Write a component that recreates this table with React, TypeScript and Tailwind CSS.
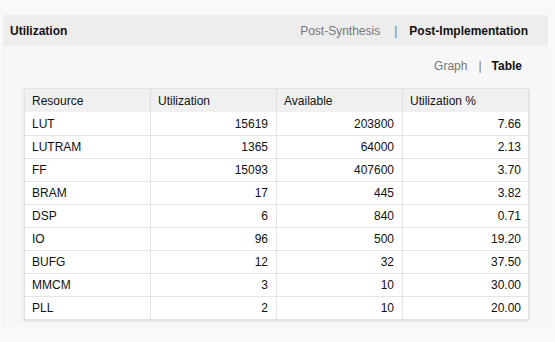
import React from "react";

const rows: [string, string, string, string][] = [
  ["LUT", "15619", "203800", "7.66"],
  ["LUTRAM", "1365", "64000", "2.13"],
  ["FF", "15093", "407600", "3.70"],
  ["BRAM", "17", "445", "3.82"],
  ["DSP", "6", "840", "0.71"],
  ["IO", "96", "500", "19.20"],
  ["BUFG", "12", "32", "37.50"],
  ["MMCM", "3", "10", "30.00"],
  ["PLL", "2", "10", "20.00"],
];

export default function App() {
  return (
    <div
      className="w-[555px] h-[342px] bg-[#f9f9fa] pt-[15px] px-[3px] text-[12px] text-[#111]"
      style={{ fontFamily: '"Liberation Sans", Arial, sans-serif' }}
    >
      <div className="w-[545px] h-[31px] bg-[#ededee] flex items-center justify-between pl-[7px] pr-[20px]">
        <span className="font-bold">Utilization</span>
        <div className="flex items-center">
          <span className="text-[#777]">Post-Synthesis</span>
          <span className="text-[#777] ml-[14px] mr-[12px]">|</span>
          <span className="font-bold">Post-Implementation</span>
        </div>
      </div>
      <div className="w-[545px] h-[283px] bg-[#f7f7f8]">
        <div className="flex justify-end items-center h-[40px] pr-[26px]">
          <span className="text-[#777]">Graph</span>
          <span className="text-[#777] ml-[11px] mr-[10px]">|</span>
          <span className="font-bold">Table</span>
        </div>
        <div className="mt-[2px] ml-[21px] w-[505px] border border-[#e2e2e3] shadow-[0_1px_3px_rgba(0,0,0,0.12)] bg-white">
          <div className="grid grid-cols-[126px_126px_126px_126px] h-[23px] bg-[#f0f0f1] items-center">
            <div className="pl-[7px] border-r border-[#dcdcdc] h-full flex items-center">Resource</div>
            <div className="pl-[7px] border-r border-[#dcdcdc] h-full flex items-center">Utilization</div>
            <div className="pl-[7px] border-r border-[#dcdcdc] h-full flex items-center">Available</div>
            <div className="pl-[7px] h-full flex items-center">Utilization %</div>
          </div>
          {rows.map((r, i) => (
            <div
              key={r[0]}
              className={`grid grid-cols-[126px_126px_126px_126px] h-[23px] ${i > 0 ? "border-t border-[#e4e4e4]" : ""}`}
            >
              <div className="pl-[7px] border-r border-[#e4e4e4] flex items-center">{r[0]}</div>
              <div className="pr-[8px] border-r border-[#e4e4e4] flex items-center justify-end">{r[1]}</div>
              <div className="pr-[8px] border-r border-[#e4e4e4] flex items-center justify-end">{r[2]}</div>
              <div className="pr-[8px] flex items-center justify-end">{r[3]}</div>
            </div>
          ))}
        </div>
      </div>
    </div>
  );
}
